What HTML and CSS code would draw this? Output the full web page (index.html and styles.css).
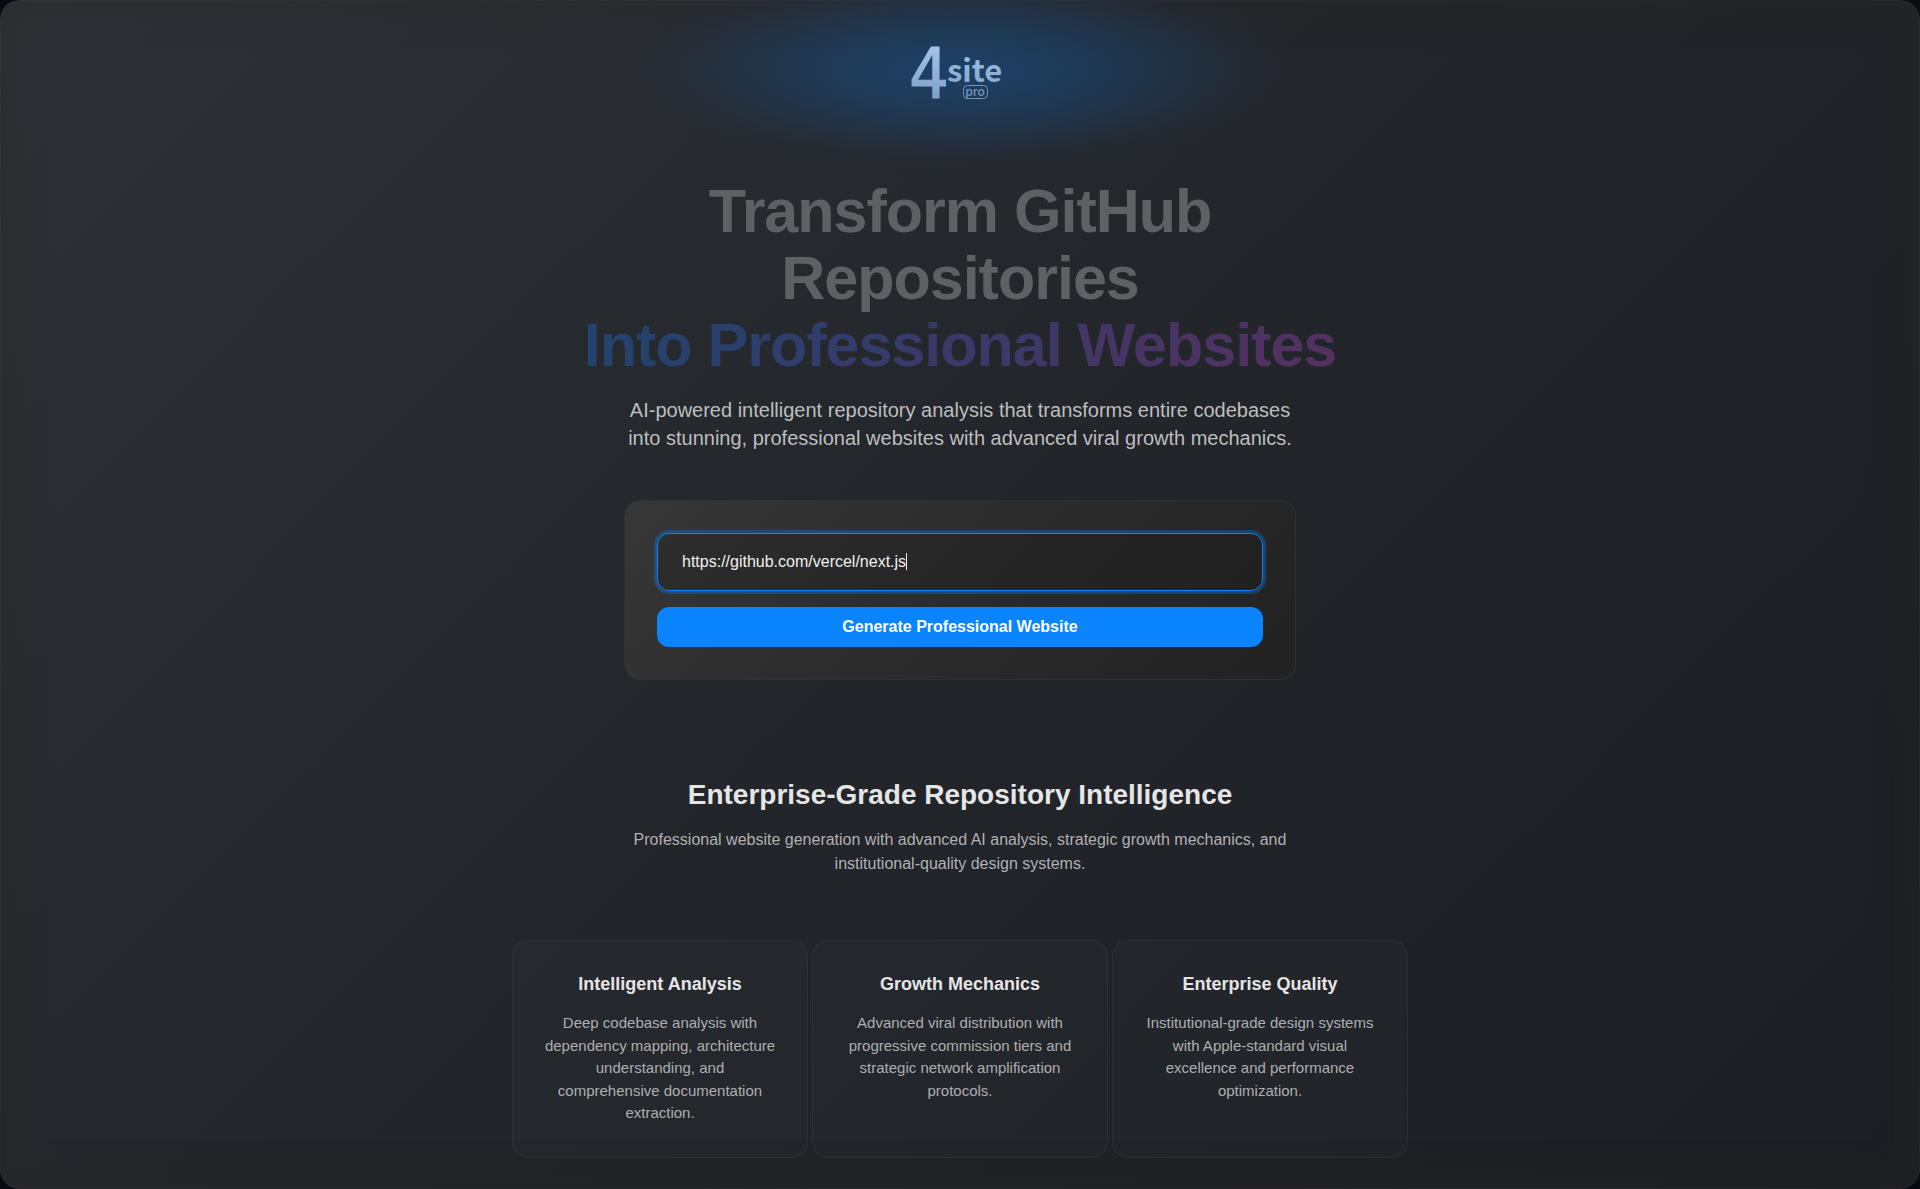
FILE: index.html
```
<!DOCTYPE html>
<html lang="en">
<head>
<meta charset="utf-8">
<meta name="viewport" content="width=device-width, initial-scale=1">
<title>4site pro</title>
<link rel="stylesheet" href="styles.css">
</head>
<body>
<div class="shell">
  <header class="brand">
    <svg class="logo" width="96" height="64" viewBox="0 0 96 64" role="img" aria-label="4site pro">
      <defs>
        <linearGradient id="ink" x1="0" y1="0" x2="0" y2="64" gradientUnits="userSpaceOnUse">
          <stop offset="0" stop-color="#a9c8ec"/>
          <stop offset="1" stop-color="#7c9dc4"/>
        </linearGradient>
      </defs>
      <text class="logo-four" x="-3" y="60" fill="url(#ink)" stroke="url(#ink)">4</text>
      <text class="logo-site" x="35" y="44" fill="url(#ink)">site</text>
      <rect x="51.5" y="47.5" width="24" height="13" rx="4" fill="none" stroke="#7395bd"/>
      <text class="logo-pro" x="63" y="58" text-anchor="middle">pro</text>
    </svg>
  </header>
  <main class="content">
    <section class="hero">
      <h1 class="headline">Transform GitHub Repositories <span class="headline-accent">Into Professional Websites</span></h1>
      <p class="lead">AI-powered intelligent repository analysis that transforms entire codebases into stunning, professional websites with advanced viral growth mechanics.</p>
      <form class="generator">
        <div class="field">
          <input class="url-input" type="url" aria-label="GitHub repository URL" value="https://github.com/vercel/next.js" autofocus>
          <span class="caret" aria-hidden="true"></span>
        </div>
        <button class="submit" type="button">Generate Professional Website</button>
      </form>
    </section>
    <section class="features">
      <h2 class="features-title">Enterprise-Grade Repository Intelligence</h2>
      <p class="features-text">Professional website generation with advanced AI analysis, strategic growth mechanics, and institutional-quality design systems.</p>
      <div class="cards">
        <article class="card">
          <h3 class="card-title">Intelligent Analysis</h3>
          <p class="card-text">Deep codebase analysis with dependency mapping, architecture understanding, and comprehensive documentation extraction.</p>
        </article>
        <article class="card">
          <h3 class="card-title">Growth Mechanics</h3>
          <p class="card-text">Advanced viral distribution with progressive commission tiers and strategic network amplification protocols.</p>
        </article>
        <article class="card">
          <h3 class="card-title">Enterprise Quality</h3>
          <p class="card-text">Institutional-grade design systems with Apple-standard visual excellence and performance optimization.</p>
        </article>
      </div>
    </section>
  </main>
</div>
</body>
</html>
```
FILE: styles.css
```
* {
  box-sizing: border-box;
  margin: 0;
}

body {
  background: #0a0a12;
  color: #e5e5e6;
  font-family: "Liberation Sans", Arial, sans-serif;
  font-size: 16px;
  line-height: 24px;
}

.shell {
  min-height: 100vh;
  padding: 0 24px 31px;
  border-radius: 20px;
  background: linear-gradient(135deg, #2e3236 0%, #23262a 45%, #1b1e22 100%);
  box-shadow: inset 0 0 40px rgba(44, 38, 38, 0.5), inset 0 0 0 1px rgba(255, 255, 255, 0.03);
}

.brand {
  display: flex;
  justify-content: center;
  height: 178px;
  padding-top: 38px;
  background: radial-gradient(ellipse 356px 108px at 50% 70px, rgba(24, 76, 134, 0.66) 0%, rgba(26, 72, 122, 0.54) 35%, rgba(30, 62, 100, 0.36) 64%, rgba(34, 48, 68, 0.2) 82%, rgba(36, 40, 46, 0) 100%);
}

.logo {
  overflow: visible;
}

.logo-four {
  font: 400 70px "DejaVu Sans Condensed", "DejaVu Sans", sans-serif;
}

.logo-site {
  font: 700 31px "Noto Sans CJK JP", sans-serif;
}

.logo-pro {
  font: 500 12px "Noto Sans CJK JP", sans-serif;
  fill: #7395bd;
}

.content {
  text-align: center;
}

.hero {
  display: flex;
  flex-direction: column;
  align-items: center;
}

.headline {
  max-width: 768px;
  font-size: 61px;
  line-height: 67px;
  letter-spacing: -1px;
  color: #5f6063;
}

.headline-accent {
  display: block;
  color: transparent;
  background: linear-gradient(135deg, #1f446e, #3d3868 55%, #56305e);
  background-clip: text;
}

.lead {
  max-width: 672px;
  margin-top: 17px;
  font-size: 20px;
  line-height: 28px;
  color: #bdbebf;
}

.generator {
  display: flex;
  flex-direction: column;
  gap: 16px;
  width: 100%;
  max-width: 672px;
  margin-top: 48px;
  padding: 32px;
  border: 1px solid #303133;
  border-radius: 16px;
  background: linear-gradient(135deg, #373738, #2b2b2c 50%, #222223);
}

.field {
  position: relative;
  display: flex;
}

.url-input {
  flex: 1;
  min-width: 0;
  height: 58px;
  padding: 0 24px;
  border: 1px solid #3a3a3c;
  border-radius: 12px;
  outline: none;
  background: rgba(28, 26, 26, 0.3);
  color: #f0f0f0;
  caret-color: transparent;
  font: inherit;
}

.url-input:focus {
  border-color: #0a84ff;
  box-shadow: 0 0 0 3px rgba(10, 132, 255, 0.3);
}

.caret {
  position: absolute;
  top: 20px;
  left: 249px;
  width: 1px;
  height: 17px;
  background: #f0f0f0;
}

.submit {
  height: 40px;
  border: 0;
  border-radius: 12px;
  background: #0a84ff;
  color: #fff;
  font: inherit;
  font-weight: 700;
}

.features {
  padding-top: 96px;
}

.features-title {
  font-size: 28px;
  line-height: 38px;
}

.features-text {
  max-width: 672px;
  margin: 14px auto 64px;
  color: #b0b1b2;
}

.cards {
  display: grid;
  grid-template-columns: repeat(3, 1fr);
  gap: 4px;
  max-width: 896px;
  margin: 0 auto;
}

.card {
  padding: 32px 30px;
  border: 1px solid rgba(255, 255, 255, 0.05);
  border-radius: 16px;
  background: rgba(255, 255, 255, 0.015);
}

.card-title {
  margin-bottom: 16px;
  font-size: 18px;
  line-height: 23px;
}

.card-text {
  font-size: 15px;
  line-height: 1.5;
  color: #aeafb0;
}
```
